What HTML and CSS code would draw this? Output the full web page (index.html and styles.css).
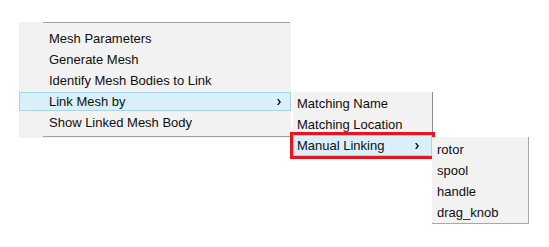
FILE: index.html
```html
<!DOCTYPE html>
<html lang="en">
<head>
  <meta charset="UTF-8">
  <meta name="viewport" content="width=device-width, initial-scale=1.0">
  <title>link mesh menu</title>
  <link rel="stylesheet" href="styles.css">
</head>
<body>
  <div class="menu main-menu">
    <div class="rule rule-top"></div>
    <div class="item">Mesh Parameters</div>
    <div class="item">Generate Mesh</div>
    <div class="item">Identify Mesh Bodies to Link</div>
    <div class="item has-sub active">
      <span>Link Mesh by</span>
      <svg class="arrow" width="4" height="6" viewBox="0 0 4 6"><path d="M0 0H1.6L4 3L1.6 6H0L2.2 3Z" fill="#111"/></svg>

      <div class="menu sub-menu">
        <div class="item">Matching Name</div>
        <div class="item">Matching Location</div>
        <div class="item has-sub active focused">
          <span>Manual Linking</span>
          <svg class="arrow" width="4" height="6" viewBox="0 0 4 6"><path d="M0 0H1.6L4 3L1.6 6H0L2.2 3Z" fill="#111"/></svg>

          <div class="menu leaf-menu">
            <div class="item">rotor</div>
            <div class="item">spool</div>
            <div class="item">handle</div>
            <div class="item">drag_knob</div>
          </div>
        </div>
      </div>
    </div>
    <div class="item">Show Linked Mesh Body</div>
    <div class="rule rule-bottom"></div>
  </div>
</body>
</html>
```

FILE: styles.css
```css
html{
  height: 100%;
}
body{
  margin: 0;
  min-height: 100%;
  overflow: hidden;
  background: #fff;
  font-family: "Liberation Sans", Arial, sans-serif;
  font-size: 13px;
  color: #0f0f0f;
}
.menu{
  background: #f2f2f2;
  box-sizing: border-box;
}
.main-menu{
  position: relative;
  margin: 22px 0 0 19px;
  width: 272px;
  padding: 6px 0 5px;
}
.rule{
  position: absolute;
  left: 24px;
  right: 1px;
  height: 1px;
  background: #a0a0a0;
}
.rule-top{
  top: 0;
}
.rule-bottom{
  bottom: 1px;
}
.item{
  position: relative;
  height: 21px;
  line-height: 21px;
  padding-left: 30px;
  white-space: nowrap;
}
.item.active{
  margin: 1px 0;
  height: 19px;
  line-height: 19px;
  background: #d9f0fb;
  box-shadow: inset 0 0 0 1px #a8d4ec;
}
.arrow{
  position: absolute;
  right: 10px;
  top: 7px;
}
.sub-menu{
  position: absolute;
  left: 274px;
  top: 0;
  width: 140px;
  padding: 1px 0 0;
  border-right: 1px solid #8c8c8c;
}
.sub-menu .item{
  padding-left: 4px;
}
.sub-menu .item.active{
  margin: 0;
  height: 21px;
  line-height: 21px;
}
.focused{
  outline: 3px solid #e8141e;
  outline-offset: 0;
}
.sub-menu .arrow{
  right: 13px;
  top: 8px;
}
.leaf-menu{
  position: absolute;
  left: 139px;
  top: 2px;
  width: 97px;
  padding: 2px 0 0;
  border-right: 1px solid #a8a8a8;
  border-bottom: 1px solid #a8a8a8;
}
.leaf-menu .item{
  padding-left: 5px;
}
```
